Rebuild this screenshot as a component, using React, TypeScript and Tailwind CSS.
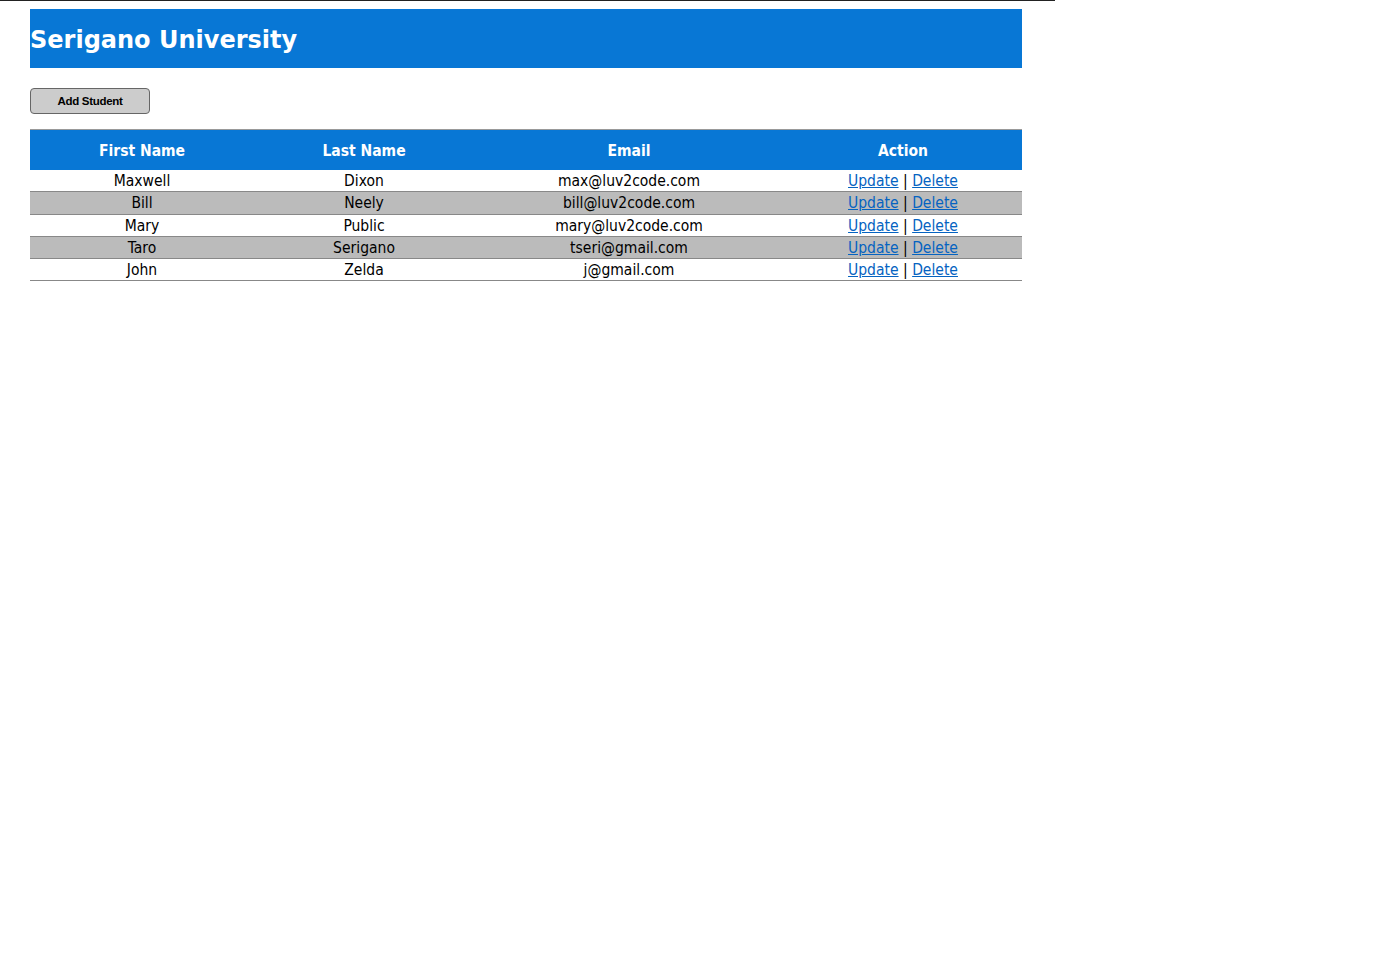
const students = [
  { first: "Maxwell", last: "Dixon", email: "max@luv2code.com" },
  { first: "Bill", last: "Neely", email: "bill@luv2code.com" },
  { first: "Mary", last: "Public", email: "mary@luv2code.com" },
  { first: "Taro", last: "Serigano", email: "tseri@gmail.com" },
  { first: "John", last: "Zelda", email: "j@gmail.com" },
];

export default function App() {
  return (
    <div className="min-h-screen bg-white">
      <div className="h-px w-[1055px] bg-[#222]" />
      <div className="pl-[30px] pt-2">
        {/* banner */}
        <div className="flex h-[59px] w-[992px] items-center bg-[#0877d5] pt-[3px]">
          <h1 className="font-['DejaVu_Sans',sans-serif] text-[24px] font-bold text-white">
            Serigano University
          </h1>
        </div>

        <button className="mt-5 h-[26px] w-[120px] rounded-[4px] border border-[#666] bg-[#cccccc] pt-[1px] font-['Liberation_Sans',Arial,sans-serif] text-[11.5px] font-bold tracking-[-0.3px] text-black">
          Add Student
        </button>

        <table className="mt-[15px] w-[992px] border-collapse border-t border-[#999] font-['DejaVu_Sans_Condensed','DejaVu_Sans',sans-serif] text-[15.5px]">
          <thead>
            <tr className="h-[40px] bg-[#0877d5] text-white">
              <th className="w-[224px] pt-[3px] font-bold">First Name</th>
              <th className="w-[220px] pt-[3px] font-bold">Last Name</th>
              <th className="w-[310px] pt-[3px] font-bold">Email</th>
              <th className="w-[238px] pt-[3px] font-bold">Action</th>
            </tr>
          </thead>
          <tbody>
            {students.map((s, i) => (
              <tr
                key={s.email}
                className={`h-[22.3px] border-b border-[#888] text-center leading-[20px] text-black ${
                  i % 2 === 1 ? "bg-[#bbbbbb]" : "bg-white"
                }`}
              >
                <td className="pt-[1px]">{s.first}</td>
                <td className="pt-[1px]">{s.last}</td>
                <td className="pt-[1px]">{s.email}</td>
                <td className="pt-[1px]">
                  <a href="#" className="text-[#0563c1] underline">
                    Update
                  </a>{" "}
                  |{" "}
                  <a href="#" className="text-[#0563c1] underline">
                    Delete
                  </a>
                </td>
              </tr>
            ))}
          </tbody>
        </table>
      </div>
    </div>
  );
}
